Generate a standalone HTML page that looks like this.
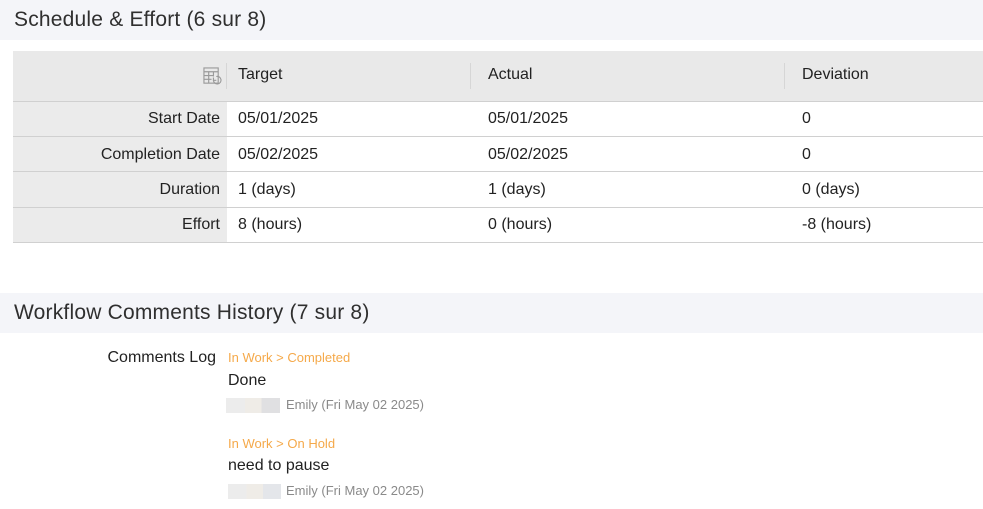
<!DOCTYPE html>
<html><head><meta charset="utf-8"><style>
*{margin:0;padding:0;box-sizing:border-box}
body{width:983px;height:509px;background:#fff;font-family:"Liberation Sans",sans-serif;color:#2a2a2a;position:relative;overflow:hidden}
.a{position:absolute;white-space:nowrap}
.hdr{position:absolute;left:0;width:983px;height:40px;background:#f4f5f9;font-size:21px;letter-spacing:0.2px;color:#2f2f2f;padding-left:14px;line-height:40px}
.lbl{position:absolute;left:13px;width:207px;text-align:right;font-size:16px;color:#222}
.v{position:absolute;font-size:16px;color:#222}
.hl{position:absolute;left:13px;width:970px;height:1px;background:#d0d0d0}
.sep{position:absolute;top:63px;width:1px;height:26px;background:#d6d6d6}
.or{color:#f5a94a;font-size:13px}
.gr{color:#8a8a8a;font-size:13px}
</style></head><body>
<div class="hdr" style="top:0">Schedule &amp; Effort (6 sur 8)</div>
<div class="a" style="left:13px;top:51px;width:970px;height:50px;background:#e9e9e9"></div>
<div class="a" style="left:13px;top:101px;width:214px;height:141px;background:#ebebeb"></div>
<svg class="a" style="left:203px;top:67px" width="19" height="19" viewBox="0 0 20 20" fill="none" stroke="#9a9a9a" stroke-width="1.2">
<rect x="1" y="1" width="15" height="16"/><path d="M1 5h15M1 9h10M1 13h8M6 5v12M11 5v5"/>
<path d="M11 14a4 4 0 1 0 3-4" fill="none"/><path d="M11 11v3h3"/></svg>
<div class="sep" style="left:226px"></div>
<div class="sep" style="left:470px"></div>
<div class="sep" style="left:784px"></div>
<div class="v" style="left:238px;top:66px">Target</div>
<div class="v" style="left:488px;top:66px">Actual</div>
<div class="v" style="left:802px;top:66px">Deviation</div>
<div class="hl" style="top:101px"></div>
<div class="hl" style="top:136px"></div>
<div class="hl" style="top:171px"></div>
<div class="hl" style="top:207px"></div>
<div class="hl" style="top:242px"></div>
<div class="lbl" style="top:110px">Start Date</div>
<div class="v" style="left:238px;top:110px">05/01/2025</div>
<div class="v" style="left:488px;top:110px">05/01/2025</div>
<div class="v" style="left:802px;top:110px">0</div>
<div class="lbl" style="top:146px">Completion Date</div>
<div class="v" style="left:238px;top:146px">05/02/2025</div>
<div class="v" style="left:488px;top:146px">05/02/2025</div>
<div class="v" style="left:802px;top:146px">0</div>
<div class="lbl" style="top:181px">Duration</div>
<div class="v" style="left:238px;top:181px">1 (days)</div>
<div class="v" style="left:488px;top:181px">1 (days)</div>
<div class="v" style="left:802px;top:181px">0 (days)</div>
<div class="lbl" style="top:216px">Effort</div>
<div class="v" style="left:238px;top:216px">8 (hours)</div>
<div class="v" style="left:488px;top:216px">0 (hours)</div>
<div class="v" style="left:802px;top:216px">-8 (hours)</div>

<div class="hdr" style="top:293px">Workflow Comments History (7 sur 8)</div>
<div class="a" style="left:0;width:216px;text-align:right;top:349px;font-size:16px;color:#222">Comments Log</div>
<div class="a or" style="left:228px;top:350px">In Work &gt; Completed</div>
<div class="a" style="left:228px;top:372px;font-size:16px;color:#222">Done</div>
<div class="a" style="left:226px;top:398px;width:54px;height:15px;background:linear-gradient(90deg,#ececec 0 35%,#efece7 35% 66%,#e0e0e2 66% 100%)"></div>
<div class="a gr" style="left:286px;top:397px">Emily (Fri May 02 2025)</div>
<div class="a or" style="left:228px;top:436px">In Work &gt; On Hold</div>
<div class="a" style="left:228px;top:457px;font-size:16px;color:#222">need to pause</div>
<div class="a" style="left:228px;top:484px;width:53px;height:15px;background:linear-gradient(90deg,#ececec 0 35%,#efece7 35% 66%,#e4e6ea 66% 100%)"></div>
<div class="a gr" style="left:286px;top:483px">Emily (Fri May 02 2025)</div>
</body></html>
